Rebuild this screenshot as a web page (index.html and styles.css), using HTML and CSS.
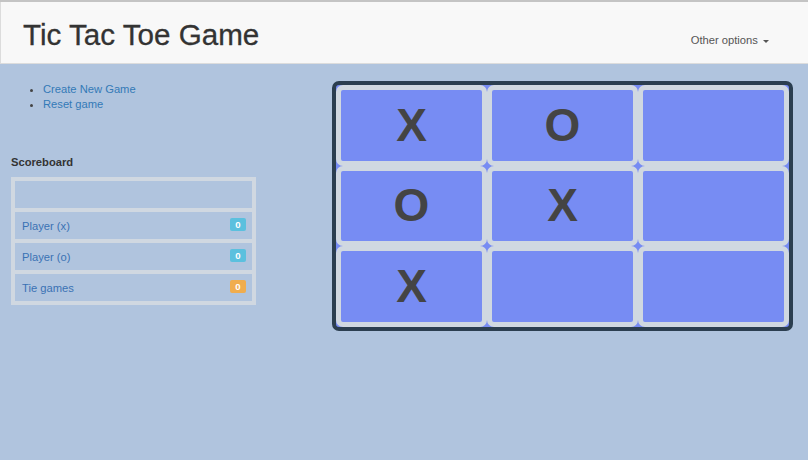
FILE: index.html
```html
<!DOCTYPE html>
<html lang="en">
<head>
<meta charset="utf-8">
<title>Tic Tac Toe Game</title>
<link rel="stylesheet" href="styles.css">
</head>
<body>
<div class="topline"></div>
<header class="navbar">
  <h1 class="title">Tic Tac Toe Game</h1>
  <a class="options" href="#">Other options <span class="caret"></span></a>
</header>
<main class="main">
  <section class="left">
    <ul class="actions">
      <li><a href="#">Create New Game</a></li>
      <li><a href="#">Reset game</a></li>
    </ul>
    <h4 class="score-title">Scoreboard</h4>
    <div class="scores">
      <div class="score-row"></div>
      <a class="score-row" href="#"><span>Player (x)</span><span class="badge info">0</span></a>
      <a class="score-row" href="#"><span>Player (o)</span><span class="badge info">0</span></a>
      <a class="score-row" href="#"><span>Tie games</span><span class="badge warn">0</span></a>
    </div>
  </section>
  <section class="board">
    <div class="cell">X</div>
    <div class="cell">O</div>
    <div class="cell"></div>
    <div class="cell">O</div>
    <div class="cell">X</div>
    <div class="cell"></div>
    <div class="cell">X</div>
    <div class="cell"></div>
    <div class="cell"></div>
  </section>
</main>
</body>
</html>
```

FILE: styles.css
```css
* { box-sizing: border-box; }

html, body {
  margin: 0;
  padding: 0;
}

body {
  background: #b0c4de;
  font-family: "Liberation Sans", Arial, Helvetica, sans-serif;
  color: #333;
  min-height: 460px;
}

a { color: #337ab7; text-decoration: none; }

.topline {
  height: 2px;
  background: #c4c4c4;
}

.navbar {
  height: 62px;
  background: #f8f8f8;
  border-bottom: 1px solid #dcdcdc;
  border-left: 1px solid #dcdcdc;
  display: flex;
  justify-content: space-between;
  align-items: flex-start;
  padding: 0 39px 0 22px;
}

.title {
  margin: 17px 0 0;
  font-size: 29.6px;
  line-height: 32px;
  font-weight: normal;
  color: #333;
  -webkit-text-stroke: 0.3px #333;
}

.options {
  margin-top: 30px;
  font-size: 11.2px;
  line-height: 16px;
  color: #555;
}

.caret {
  display: inline-block;
  width: 0;
  height: 0;
  margin-left: 2px;
  vertical-align: middle;
  border-top: 3.5px solid #555;
  border-left: 3.5px solid transparent;
  border-right: 3.5px solid transparent;
}

.main {
  display: flex;
  align-items: flex-start;
  padding: 17px 0 0 11px;
}

.left {
  width: 321px;
  flex: none;
}

.actions {
  margin: 1px 0 0;
  padding-left: 32px;
  font-size: 11.2px;
  line-height: 15px;
  color: #444;
}

.actions li {
  height: 15px;
}

.score-title {
  margin: 43px 0 7px;
  font-size: 11.2px;
  line-height: 15px;
  font-weight: bold;
  color: #333;
}

.scores {
  width: 245px;
  border: 4px solid #d0d8e1;
  background: #d0d8e1;
  display: grid;
  grid-auto-rows: 27px;
  gap: 4px;
}

.score-row {
  background: #b0c4de;
  display: flex;
  align-items: center;
  justify-content: space-between;
  padding: 0 6px 0 7px;
  font-size: 11.2px;
  color: #3a72b4;
}

.badge {
  width: 16px;
  height: 13px;
  border-radius: 2px;
  color: #fff;
  font-size: 9.6px;
  font-weight: bold;
  line-height: 13px;
  text-align: center;
  margin-top: -2px;
}

.badge.info { background: #5bc0de; }
.badge.warn { background: #f0ad4e; }

.board {
  flex: none;
  display: grid;
  grid-template-columns: 151px 151px 151px;
  grid-template-rows: 81px 80px 81px;
  border: 4px solid #2b3e50;
  border-radius: 7px;
  background: #778cf3;
}

.cell {
  border: 5px solid #d0d8e1;
  border-radius: 7px;
  background: #778cf3;
  display: flex;
  align-items: center;
  justify-content: center;
  font-size: 46px;
  font-weight: bold;
  color: #444;
  padding-bottom: 2px;
}
```
